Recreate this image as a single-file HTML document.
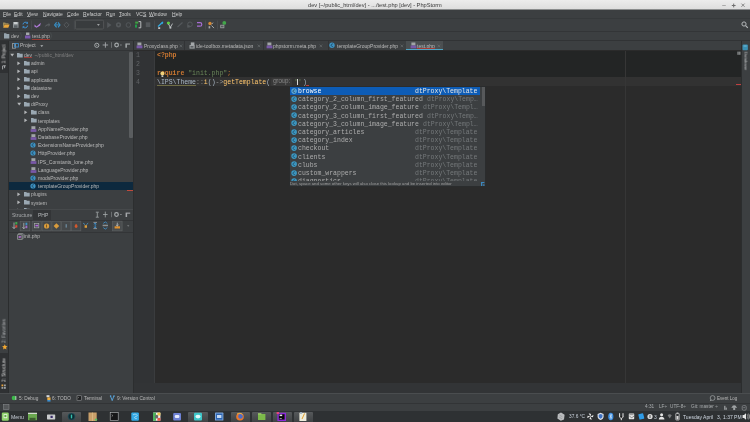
<!DOCTYPE html>
<html><head><meta charset="utf-8">
<style>
*{margin:0;padding:0;box-sizing:border-box}
html,body{width:750px;height:422px;overflow:hidden;background:#3c3f41;font-family:"Liberation Sans",sans-serif;}
.a{position:absolute}
.t{position:absolute;white-space:nowrap;will-change:transform;font-size:5px;line-height:6px;color:#bbbbbb}
u{text-decoration:underline;text-decoration-color:#9a9da0;text-decoration-thickness:0.6px;text-underline-offset:0.2px}
.m{font-family:"Liberation Mono",monospace}
</style></head><body>
<!-- title bar -->
<div class="a" style="left:0;top:0;width:750px;height:9px;background:linear-gradient(#ececec,#dedede)"></div>
<div class="a" style="left:0;top:9px;width:750px;height:1px;background:#8a8c8d"></div>
<div class="t" style="left:308px;top:1.5px;color:#3a3a3a;font-size:5.68px;line-height:7px">dev [~/public_html/dev] - .../test.php [dev] - PhpStorm</div>

<svg class="a" style="left:718px;top:0" width="32" height="9">
<rect x="4.2" y="5.1" width="3.6" height="0.8" fill="#9c9c9c"/>
<path d="M15.7 3.6v3.8M13.8 5.5h3.8" stroke="#6e6e6e" stroke-width="1"/>
<path d="M23.4 3.6l3.2 3.2M26.6 3.6l-3.2 3.2" stroke="#7e7e7e" stroke-width="0.9"/>
</svg>
<!-- menu/toolbar/nav bg -->
<div class="a" style="left:0;top:10px;width:750px;height:30px;background:#3c3f41"></div>
<div class="a" style="left:0;top:18.3px;width:750px;height:0.8px;background:#36393b"></div>
<div class="a" style="left:0;top:30.8px;width:750px;height:0.9px;background:#333537"></div>
<div class="a" style="left:0;top:40.2px;width:750px;height:0.9px;background:#313335"></div>


<!-- MENU -->
<div class="t" style="left:2.5px;top:11px;color:#cdcdcd"><u>F</u>ile</div>
<div class="t" style="left:14.4px;top:11px;color:#cdcdcd"><u>E</u>dit</div>
<div class="t" style="left:26.7px;top:11px;color:#cdcdcd"><u>V</u>iew</div>
<div class="t" style="left:42.7px;top:11px;color:#cdcdcd"><u>N</u>avigate</div>
<div class="t" style="left:67px;top:11px;color:#cdcdcd"><u>C</u>ode</div>
<div class="t" style="left:83px;top:11px;color:#cdcdcd"><u>R</u>efactor</div>
<div class="t" style="left:106.4px;top:11px;color:#cdcdcd">R<u>u</u>n</div>
<div class="t" style="left:119.2px;top:11px;color:#cdcdcd"><u>T</u>ools</div>
<div class="t" style="left:136px;top:11px;color:#cdcdcd">VC<u>S</u></div>
<div class="t" style="left:149.3px;top:11px;color:#cdcdcd"><u>W</u>indow</div>
<div class="t" style="left:171.7px;top:11px;color:#cdcdcd"><u>H</u>elp</div>


<!-- TOOLBAR -->
<svg class="a" style="left:0;top:19px" width="240" height="12" viewBox="0 0 240 12">
 <!-- open folder -->
 <path d="M3 3.5h2.2l.6.8H8.5v1H4.6L3 8.8z" fill="#9a8a5a"/>
 <path d="M3.2 8.8L4.6 5.4H9.6L8.3 8.8z" fill="#e7a53a"/>
 <!-- save -->
 <rect x="13" y="3" width="5.5" height="5.8" fill="#8e9497"/>
 <rect x="14" y="3" width="3.5" height="2" fill="#c8ccce"/>
 <rect x="14" y="6.3" width="3.5" height="2.5" fill="#5a6064"/>
 <!-- sync -->
 <path d="M23 5.5a2.5 2.5 0 0 1 4.6-1.2M27.6 6.5a2.5 2.5 0 0 1-4.6 1.2" stroke="#3e8fcf" stroke-width="1" fill="none"/>
 <path d="M27.9 2.6v2.2h-2.2z M22.6 9.4v-2.2h2.2z" fill="#3e8fcf"/>
 <rect x="31.3" y="1.5" width="0.6" height="9" fill="#4f5356"/>
 <!-- purple check -->
 <path d="M34.6 5.6l2 1.8 4.2-3.6-.6 2.6-3.6 2.4-2.2-1.2z" fill="#b07ad8"/>
 <!-- gray arrow -->
 <path d="M44.6 8.5c.8-2.4 2.4-3.4 4-3.4V3.6l1.6 2.2-1.6 2.2V6.6c-1.6 0-2.8.6-4 1.9z" fill="#5a5e61"/>
 <!-- blue arrows -->
 <path d="M56.6 3.4l-2 2.5 2 2.5M58 3.4l2 2.5-2 2.5" stroke="#3893cc" stroke-width="1.1" fill="none"/>
 <rect x="55.6" y="5.4" width="3.4" height="1" fill="#3893cc"/>
 <!-- gray diamond -->
 <path d="M66.5 3.2l2.6 2.7-2.6 2.7-2.6-2.7z" stroke="#55595c" stroke-width="1" fill="none"/>
 <rect x="73.9" y="1.5" width="0.6" height="9" fill="#4f5356"/>
 <!-- combo box -->
 <rect x="75.4" y="1.2" width="28.2" height="8.8" rx="1.2" fill="#393c3e" stroke="#5b5e60" stroke-width="0.7"/>
 <path d="M97 5.3h2.8l-1.4 1.5z" fill="#c0c3c5"/>
 <!-- play -->
 <path d="M107.2 3l4.3 3-4.3 3z" fill="#54585b"/>
 <!-- debug gear -->
 <circle cx="118.5" cy="5.8" r="2.6" fill="#55595c"/><circle cx="118.5" cy="5.8" r="1" fill="#3c3f41"/>
 <circle cx="128.4" cy="6" r="2.3" stroke="#55595c" stroke-width="0.9" fill="none"/>
 <!-- coverage -->
 <rect x="135.2" y="2.6" width="3" height="2" fill="#3fa142"/>
 <rect x="135.2" y="5.6" width="1.6" height="3" fill="#1fb64e"/>
 <path d="M138.6 2.6h2.2v6.2h-2.2" stroke="#c5c8ca" stroke-width="0.9" fill="none"/>
 <!-- stop -->
 <rect x="145.8" y="3.3" width="4.5" height="4.8" fill="#55595c"/>
 <rect x="154.3" y="1.5" width="0.6" height="9" fill="#4f5356"/>
 <!-- vcs update -->
 <path d="M158 7.5l5-4.5" stroke="#2fa8e0" stroke-width="1.3"/>
 <path d="M160.6 4.2l2.6-1.6-.6 2.6z" fill="#2fa8e0"/>
 <rect x="158.2" y="8.3" width="2" height="1.6" fill="#d0d3d5"/>
 <!-- commit -->
 <circle cx="168.4" cy="4" r="1.6" fill="#5fcf43"/>
 <path d="M168.5 5l1.8 3.4 2.2-3.8" stroke="#c0c3c5" stroke-width="0.9" fill="none"/>
 <rect x="169.5" y="7.8" width="1.8" height="1.8" fill="#c0c3c5"/>
 <path d="M177.5 8l5-4.5" stroke="#55595c" stroke-width="1.1"/>
 <circle cx="190" cy="5.3" r="2.3" stroke="#55595c" stroke-width="1" fill="none"/>
 <rect x="187.2" y="6.2" width="2.4" height="2.4" fill="#55595c"/>
 <!-- revert -->
 <path d="M197 3.6h3a1.8 1.8 0 0 1 0 3.6h-3" stroke="#a66ed3" stroke-width="1.2" fill="none"/>
 <rect x="205.2" y="1.5" width="0.6" height="9" fill="#4f5356"/>
 <!-- settings -->
 <circle cx="210" cy="4.5" r="1.7" fill="#d58a36"/>
 <path d="M211.5 6.5l2.5 2.6M213 3.6l-1.2 1.6" stroke="#a5a9ab" stroke-width="1"/>
 <rect x="208.6" y="7.2" width="1.6" height="2.2" fill="#a5a9ab"/>
 <rect x="217.3" y="1.5" width="0.6" height="9" fill="#4f5356"/>
 <!-- project structure -->
 <circle cx="224.3" cy="3.9" r="1.9" fill="#42a64a"/>
 <rect x="220.3" y="5.8" width="4" height="3.4" fill="#9ea2a4"/>
 <rect x="221" y="6.6" width="2.6" height="1.8" fill="#55595c"/>
</svg>
<!-- search icon -->
<svg class="a" style="left:738px;top:20px" width="12" height="10"><circle cx="6" cy="4" r="2.1" stroke="#b5b8ba" stroke-width="1" fill="none"/><path d="M7.6 5.6l2.2 2.2" stroke="#b5b8ba" stroke-width="1.2"/></svg>

<!-- NAV BAR -->
<svg class="a" style="left:0;top:31px" width="60" height="9">
 <path d="M4 2.3h2.2l.5.6h2.6v4.5H4z" fill="#95a3ad"/>
 <path d="M20.3 1.5l1.2 3.2-1.2 3.2" stroke="#4e5254" stroke-width="0.6" fill="none"/>
 <rect x="26" y="1.5" width="3.4" height="2.6" fill="#a4a8aa"/>
 <rect x="25" y="4.5" width="5.4" height="3" fill="#7b58ae"/>
 <path d="M50.5 1.5l1.2 3.2-1.2 3.2" stroke="#4e5254" stroke-width="0.6" fill="none"/>
</svg>
<div class="t" style="left:11px;top:32.5px">dev</div>
<div class="t" style="left:32px;top:32.5px">test.php</div><div class="a" style="left:32.3px;top:38.6px;width:17.5px;height:0.6px;background:#9a3a32"></div>

<!-- left stripe -->
<div class="a" style="left:0;top:41px;width:8px;height:352px;background:#3c3f41"></div>
<div class="a" style="left:8px;top:41px;width:1px;height:352px;background:#2b2d2e"></div>
<!-- right stripe -->
<div class="a" style="left:741px;top:41px;width:1px;height:352px;background:#2b2d2e"></div>
<div class="a" style="left:742px;top:41px;width:8px;height:352px;background:#3c3f41"></div>

<!-- STRIPES -->
<div class="a" style="left:0;top:41px;width:8px;height:32.2px;background:#2f3133"></div>
<div class="a" style="left:0;top:352.5px;width:8px;height:40px;background:#2f3133"></div>
<div class="t" style="left:4.2px;top:53.7px;transform:translate(-50%,-50%) rotate(-90deg);font-size:4.45px;line-height:5px;color:#d0d0d0">1: Project</div>
<svg class="a" style="left:1.8px;top:65px" width="5" height="5"><path d="M0.6 0.8v3.6M0.8 0.8h3M2.6 0.8v2.4" stroke="#c0c3c5" stroke-width="0.8" fill="none"/></svg>
<div class="t" style="left:4.2px;top:330.6px;transform:translate(-50%,-50%) rotate(-90deg);font-size:4.54px;line-height:5px;color:#a8abad">2: Favorites</div>
<svg class="a" style="left:1.5px;top:344.3px" width="6" height="6"><path d="M2.8 0.3l.8 1.8 1.9.2-1.4 1.3.4 1.9-1.7-1-1.7 1 .4-1.9L.1 2.3 2 2.1z" fill="#f0a732"/></svg>
<div class="t" style="left:4.2px;top:370px;transform:translate(-50%,-50%) rotate(-90deg);font-size:4.64px;line-height:5px;color:#d0d0d0">2: Structure</div>
<svg class="a" style="left:1.3px;top:383.5px" width="6" height="6"><rect x="0.5" y="0.5" width="1.8" height="1.8" fill="#e8a33d"/><rect x="3" y="0.5" width="1.8" height="1.8" fill="#9ea2a4"/><rect x="0.5" y="3" width="1.8" height="1.8" fill="#9ea2a4"/><rect x="3" y="3" width="1.8" height="1.8" fill="#9ea2a4"/></svg>
<svg class="a" style="left:742.2px;top:43.7px" width="7" height="7"><rect x="0.5" y="0.5" width="5.4" height="5.8" rx="1" fill="#3a90b4"/><ellipse cx="3.2" cy="2" rx="1.9" ry="0.8" fill="#66b0cc"/></svg>
<div class="t" style="left:745.5px;top:60.5px;transform:translate(-50%,-50%) rotate(90deg);font-size:4.32px;line-height:5px;color:#c8cacc">Database</div>

<!-- project panel -->
<div class="a" style="left:9px;top:41px;width:124px;height:168px;background:#3c3f41"></div>
<div class="a" style="left:9px;top:50px;width:124px;height:1px;background:#323436"></div>
<div class="a" style="left:9px;top:209px;width:124px;height:0.8px;background:#46494b"></div>
<!-- PROJECT HEADER -->
<svg class="a" style="left:12px;top:42.5px" width="8" height="6"><rect x="0.5" y="0.6" width="3" height="4.6" fill="none" stroke="#9ea2a4" stroke-width="0.8"/><rect x="2.6" y="0.6" width="3.8" height="3.4" fill="none" stroke="#3e8fcf" stroke-width="0.9"/></svg>
<div class="t" style="left:20px;top:42.4px">Project</div>
<svg class="a" style="left:39.5px;top:44.5px" width="4" height="3"><path d="M0.3 0.3h3l-1.5 1.7z" fill="#b4b7b9"/></svg>
<svg class="a" style="left:90px;top:41px" width="43" height="8">
 <circle cx="6.8" cy="4.3" r="2.1" stroke="#a5a9ab" stroke-width="1" fill="none"/><path d="M6.2 3.6l1.4.7-1.4.7z" fill="#a5a9ab"/>
 <path d="M15.4 1.3v5.4M12.7 4h5.4" stroke="#a5a9ab" stroke-width="0.9"/>
 <rect x="21.2" y="1.2" width="0.6" height="5.6" fill="#8c8f91"/>
 <circle cx="26.6" cy="4" r="1.8" stroke="#a5a9ab" stroke-width="1.2" fill="none"/>
 <rect x="30" y="3.7" width="1.8" height="0.6" fill="#a5a9ab"/>
 <rect x="35.4" y="2.5" width="1.5" height="4.2" fill="#a5a9ab"/><rect x="36.6" y="2.5" width="3.4" height="1.1" fill="#a5a9ab"/>
</svg>
<!-- PROJECT TREE -->
<div class="a" style="left:9px;top:51px;width:124px;height:158px;overflow:hidden">
<svg class="a" style="left:1.0px;top:2.00px" width="5" height="4"><path d="M0.3 0.8h3.8l-1.9 2.6z" fill="#b4b7b9"/></svg>
<svg class="a" style="left:7.8px;top:1.60px" width="7" height="5"><path d="M0 0.1h2.3l.6.6H5.7V4.6H0z" fill="#9aa8b2"/></svg>
<div class="t" style="left:15.3px;top:1.10px;color:#bbbbbb"><span style="text-decoration:underline;text-decoration-color:#9a3a36;text-decoration-thickness:0.5px;text-underline-offset:0.3px">dev</span><span style="color:#808080;margin-left:2.5px">~/public_html/dev</span></div>
<svg class="a" style="left:8.0px;top:9.99px" width="4" height="5"><path d="M0.4 0.4v3.8l2.9-1.9z" fill="#b4b7b9"/></svg>
<svg class="a" style="left:14.8px;top:9.79px" width="7" height="5"><path d="M0 0.1h2.3l.6.6H5.7V4.6H0z" fill="#9aa8b2"/></svg>
<div class="t" style="left:22.3px;top:9.29px;color:#bbbbbb">admin</div>
<svg class="a" style="left:8.0px;top:18.18px" width="4" height="5"><path d="M0.4 0.4v3.8l2.9-1.9z" fill="#b4b7b9"/></svg>
<svg class="a" style="left:14.8px;top:17.98px" width="7" height="5"><path d="M0 0.1h2.3l.6.6H5.7V4.6H0z" fill="#9aa8b2"/></svg>
<div class="t" style="left:22.3px;top:17.48px;color:#bbbbbb">api</div>
<svg class="a" style="left:8.0px;top:26.37px" width="4" height="5"><path d="M0.4 0.4v3.8l2.9-1.9z" fill="#b4b7b9"/></svg>
<svg class="a" style="left:14.8px;top:26.17px" width="7" height="5"><path d="M0 0.1h2.3l.6.6H5.7V4.6H0z" fill="#9aa8b2"/></svg>
<div class="t" style="left:22.3px;top:25.67px;color:#bbbbbb">applications</div>
<svg class="a" style="left:8.0px;top:34.56px" width="4" height="5"><path d="M0.4 0.4v3.8l2.9-1.9z" fill="#b4b7b9"/></svg>
<svg class="a" style="left:14.8px;top:34.36px" width="7" height="5"><path d="M0 0.1h2.3l.6.6H5.7V4.6H0z" fill="#9aa8b2"/></svg>
<div class="t" style="left:22.3px;top:33.86px;color:#bbbbbb">datastore</div>
<svg class="a" style="left:8.0px;top:42.75px" width="4" height="5"><path d="M0.4 0.4v3.8l2.9-1.9z" fill="#b4b7b9"/></svg>
<svg class="a" style="left:14.8px;top:42.55px" width="7" height="5"><path d="M0 0.1h2.3l.6.6H5.7V4.6H0z" fill="#9aa8b2"/></svg>
<div class="t" style="left:22.3px;top:42.05px;color:#bbbbbb">dev</div>
<svg class="a" style="left:8.0px;top:51.14px" width="5" height="4"><path d="M0.3 0.8h3.8l-1.9 2.6z" fill="#b4b7b9"/></svg>
<svg class="a" style="left:14.8px;top:50.74px" width="7" height="5"><path d="M0 0.1h2.3l.6.6H5.7V4.6H0z" fill="#9aa8b2"/></svg>
<div class="t" style="left:22.3px;top:50.24px;color:#bbbbbb">dtProxy</div>
<svg class="a" style="left:15.0px;top:59.13px" width="4" height="5"><path d="M0.4 0.4v3.8l2.9-1.9z" fill="#b4b7b9"/></svg>
<svg class="a" style="left:21.8px;top:58.93px" width="7" height="5"><path d="M0 0.1h2.3l.6.6H5.7V4.6H0z" fill="#9aa8b2"/></svg>
<div class="t" style="left:29.3px;top:58.43px;color:#bbbbbb">class</div>
<svg class="a" style="left:15.0px;top:67.32px" width="4" height="5"><path d="M0.4 0.4v3.8l2.9-1.9z" fill="#b4b7b9"/></svg>
<svg class="a" style="left:21.8px;top:67.12px" width="7" height="5"><path d="M0 0.1h2.3l.6.6H5.7V4.6H0z" fill="#9aa8b2"/></svg>
<div class="t" style="left:29.3px;top:66.62px;color:#bbbbbb">templates</div>
<svg class="a" style="left:21.0px;top:74.71px" width="7" height="6"><rect x="1.4" y="0.2" width="4" height="3" fill="#a0a4a6"/><rect x="0.6" y="3.2" width="5.8" height="2.7" fill="#7858a8"/></svg>
<div class="t" style="left:29.3px;top:74.81px;color:#bbbbbb">AppNameProvider.php</div>
<svg class="a" style="left:21.0px;top:82.90px" width="7" height="6"><rect x="1.4" y="0.2" width="4" height="3" fill="#a0a4a6"/><rect x="0.6" y="3.2" width="5.8" height="2.7" fill="#7858a8"/></svg>
<div class="t" style="left:29.3px;top:83.00px;color:#bbbbbb">DatabaseProvider.php</div>
<svg class="a" style="left:21.2px;top:91.09px" width="7" height="6"><circle cx="3" cy="3" r="2.6" fill="#3d94c5"/><path d="M4 1.9a1.3 1.3 0 1 0 0 2.2" stroke="#1d3a4e" stroke-width="0.7" fill="none"/></svg>
<div class="t" style="left:29.3px;top:91.19px;color:#bbbbbb">ExtensionsNameProvider.php</div>
<svg class="a" style="left:21.2px;top:99.28px" width="7" height="6"><circle cx="3" cy="3" r="2.6" fill="#3d94c5"/><path d="M4 1.9a1.3 1.3 0 1 0 0 2.2" stroke="#1d3a4e" stroke-width="0.7" fill="none"/></svg>
<div class="t" style="left:29.3px;top:99.38px;color:#bbbbbb">HttpProvider.php</div>
<svg class="a" style="left:21.0px;top:107.47px" width="7" height="6"><rect x="1.4" y="0.2" width="4" height="3" fill="#a0a4a6"/><rect x="0.6" y="3.2" width="5.8" height="2.7" fill="#7858a8"/></svg>
<div class="t" style="left:29.3px;top:107.57px;color:#bbbbbb">IPS_Constants_lone.php</div>
<svg class="a" style="left:21.0px;top:115.66px" width="7" height="6"><rect x="1.4" y="0.2" width="4" height="3" fill="#a0a4a6"/><rect x="0.6" y="3.2" width="5.8" height="2.7" fill="#7858a8"/></svg>
<div class="t" style="left:29.3px;top:115.76px;color:#bbbbbb">LanguageProvider.php</div>
<svg class="a" style="left:21.2px;top:123.85px" width="7" height="6"><circle cx="3" cy="3" r="2.6" fill="#3d94c5"/><path d="M4 1.9a1.3 1.3 0 1 0 0 2.2" stroke="#1d3a4e" stroke-width="0.7" fill="none"/></svg>
<div class="t" style="left:29.3px;top:123.95px;color:#bbbbbb">modsProvider.php</div>
<div class="a" style="left:0;top:130.94px;width:124px;height:8.2px;background:#0d293e"></div>
<svg class="a" style="left:21.2px;top:132.04px" width="7" height="6"><circle cx="3" cy="3" r="2.6" fill="#3d94c5"/><path d="M4 1.9a1.3 1.3 0 1 0 0 2.2" stroke="#1d3a4e" stroke-width="0.7" fill="none"/></svg>
<div class="t" style="left:29.3px;top:132.14px;color:#bbbbbb">templateGroupProvider.php</div>
<svg class="a" style="left:8.0px;top:141.03px" width="4" height="5"><path d="M0.4 0.4v3.8l2.9-1.9z" fill="#b4b7b9"/></svg>
<svg class="a" style="left:14.8px;top:140.83px" width="7" height="5"><path d="M0 0.1h2.3l.6.6H5.7V4.6H0z" fill="#9aa8b2"/></svg>
<div class="t" style="left:22.3px;top:140.33px;color:#bbbbbb">plugins</div>
<svg class="a" style="left:8.0px;top:149.22px" width="4" height="5"><path d="M0.4 0.4v3.8l2.9-1.9z" fill="#b4b7b9"/></svg>
<svg class="a" style="left:14.8px;top:149.02px" width="7" height="5"><path d="M0 0.1h2.3l.6.6H5.7V4.6H0z" fill="#9aa8b2"/></svg>
<div class="t" style="left:22.3px;top:148.52px;color:#bbbbbb">system</div>
<svg class="a" style="left:8.0px;top:157.41px" width="4" height="5"><path d="M0.4 0.4v3.8l2.9-1.9z" fill="#b4b7b9"/></svg>
<svg class="a" style="left:14.8px;top:157.21px" width="7" height="5"><path d="M0 0.1h2.3l.6.6H5.7V4.6H0z" fill="#9aa8b2"/></svg>
<div class="t" style="left:22.3px;top:156.71px;color:#bbbbbb">uploads</div>
<div class="a" style="left:120px;top:1px;width:3.5px;height:86px;background:#5a5d5f;border-radius:1px"></div>
<div class="a" style="left:118px;top:138.7px;width:6px;height:0.9px;background:#c04a3c"></div>
</div>
<!-- structure panel -->
<div class="a" style="left:9px;top:210px;width:124px;height:183px;background:#3c3f41"></div>

<!-- STRUCTURE -->
<div class="a" style="left:33.2px;top:210px;width:18.3px;height:9.6px;background:#333537"></div>
<div class="t" style="left:11.8px;top:211.8px;color:#a8abad">Structure</div>
<div class="t" style="left:38px;top:211.8px;color:#b8bbbd">PHP</div>
<div class="a" style="left:9px;top:219.5px;width:124px;height:0.8px;background:#333537"></div>
<svg class="a" style="left:90px;top:210px" width="43" height="10">
 <path d="M7.3 2.4v4.6M5.8 2.2h3M5.8 7.2h3" stroke="#a5a9ab" stroke-width="0.8"/>
 <path d="M15.3 1.6v5.8M13 4.5h4.6" stroke="#a5a9ab" stroke-width="0.8"/>
 <rect x="21.3" y="1.8" width="0.6" height="5.4" fill="#8c8f91"/>
 <circle cx="26.5" cy="4.5" r="1.8" stroke="#a5a9ab" stroke-width="1.2" fill="none"/>
 <rect x="30" y="4.2" width="1.8" height="0.6" fill="#a5a9ab"/>
 <rect x="35.6" y="2.6" width="1.5" height="4.4" fill="#a5a9ab"/><rect x="36.8" y="2.6" width="3.4" height="1.1" fill="#a5a9ab"/>
</svg>
<svg class="a" style="left:9px;top:220px" width="124" height="12">
 <path d="M5 2.5v6M3.3 6.8l1.7 1.8 1.7-1.8" stroke="#b4b7b9" stroke-width="0.8" fill="none"/>
 <rect x="6.3" y="2" width="2" height="2.5" fill="#3fa54a"/><rect x="6.3" y="5.2" width="2" height="2.4" fill="#d9473a"/>
 <rect x="11.2" y="1.2" width="9.6" height="9.6" fill="#45484a" stroke="#5c5f61" stroke-width="0.7"/>
 <path d="M14.8 2.8v6M13.4 7.2l1.4 1.5 1.4-1.5" stroke="#b4b7b9" stroke-width="0.8" fill="none"/>
 <rect x="16.5" y="2.7" width="1.8" height="2.4" fill="#3d94c5"/><rect x="16.5" y="5.6" width="1.8" height="2.6" fill="#9b6cc9"/>
 <rect x="23.2" y="1.2" width="9" height="9.6" fill="#45484a" stroke="#5c5f61" stroke-width="0.7"/>
 <rect x="25.6" y="3.4" width="4.2" height="4.4" fill="none" stroke="#a5a9ab" stroke-width="0.7"/><rect x="26.4" y="4.8" width="2.8" height="1.6" fill="#b468e0"/>
 <rect x="33.1" y="1.2" width="9" height="9.6" fill="#45484a" stroke="#5c5f61" stroke-width="0.7"/>
 <circle cx="37.6" cy="6" r="2.6" fill="#d89b3c"/><rect x="37.2" y="4.5" width="0.8" height="3" fill="#6a4a1a"/>
 <rect x="42.9" y="1.2" width="9" height="9.6" fill="#45484a" stroke="#5c5f61" stroke-width="0.7"/>
 <path d="M47.4 3.2l2.8 2.8-2.8 2.8-2.8-2.8z" fill="#d89b3c"/>
 <rect x="52.7" y="1.2" width="9" height="9.6" fill="#45484a" stroke="#5c5f61" stroke-width="0.7"/>
 <rect x="56.6" y="4.2" width="1.2" height="3.4" fill="#6f8ea4"/>
 <rect x="62.5" y="1.2" width="9.3" height="9.6" fill="#45484a" stroke="#5c5f61" stroke-width="0.7"/>
 <path d="M67.1 3.8c1 1 1.4 1.8 1.4 2.8a1.4 1.4 0 0 1-2.8 0c0-1 .4-1.8 1.4-2.8z" fill="#d3582d"/>
 <path d="M74.2 3.2l1.8 1.4M79.2 3.2l-1.8 1.4" stroke="#4aa0d6" stroke-width="0.8"/>
 <rect x="75.6" y="5.2" width="2.4" height="2.6" fill="#d89b3c"/>
 <path d="M84.4 2.4h3.6M84.4 8.6h3.6" stroke="#b0b3b5" stroke-width="0.7"/><path d="M86.2 3v5M85 4.2l1.2-1.2 1.2 1.2M85 6.8l1.2 1.2 1.2-1.2" stroke="#3d94d4" stroke-width="0.8" fill="none"/>
 <path d="M94.3 3.4l2-1.5 2 1.5M94.3 7.6l2 1.5 2-1.5" stroke="#3d94d4" stroke-width="0.8" fill="none"/><rect x="93.6" y="4.7" width="5.4" height="1.5" fill="#8d9193"/>
 <rect x="103.5" y="1.2" width="9.6" height="9.6" fill="#4a4d4f" stroke="#5c5f61" stroke-width="0.7"/>
 <rect x="105.6" y="6.3" width="5.4" height="2.2" fill="#e0922f"/><path d="M108.3 2.6v3.4M107 4.8l1.3 1.2 1.3-1.2" stroke="#c5c8ca" stroke-width="0.7" fill="none"/>
 <path d="M118 5.4h2.4l-1.2 1z" fill="#9a9ea0"/>
</svg>
<div class="a" style="left:9px;top:231.8px;width:124px;height:0.7px;background:#333537"></div>
<svg class="a" style="left:16.6px;top:233px" width="7" height="7"><rect x="1.5" y="0.4" width="4.6" height="5.6" rx="0.5" fill="none" stroke="#9ea2a4" stroke-width="0.7"/><rect x="0.5" y="1.4" width="4.6" height="5.2" rx="0.5" fill="#4a4d4f" stroke="#9ea2a4" stroke-width="0.7"/><path d="M1.6 3.2h2.8l-.9 1.6H1.6z" fill="#c06ce0"/></svg>
<div class="t" style="left:23.6px;top:233.3px">init.php</div>

<!-- editor -->
<div class="a" style="left:133px;top:41px;width:608px;height:9px;background:#3c3f41"></div>
<div class="a" style="left:133px;top:50px;width:608px;height:1px;background:#2b2b2b"></div>
<div class="a" style="left:133px;top:51px;width:608px;height:342px;background:#323436"></div>
<div class="a" style="left:133px;top:51px;width:21px;height:332.2px;background:#313335"></div>
<div class="a" style="left:133px;top:41px;width:0.9px;height:352px;background:#2c2e2f"></div>
<div class="a" style="left:154px;top:51px;width:1px;height:332.2px;background:#3a3c3e"></div>
<div class="a" style="left:155px;top:51px;width:586px;height:332.2px;background:#2b2b2b"></div>
<div class="a" style="left:155px;top:51px;width:586px;height:26px;background:#232525"></div>
<div class="a" style="left:155px;top:77px;width:586px;height:9px;background:#323232"></div>
<div class="a" style="left:625px;top:51px;width:0.8px;height:332.2px;background:#363636"></div>

<!-- TABS -->
<div class="a" style="left:405.8px;top:41px;width:37.6px;height:9px;background:#4b4f51"></div>
<div class="a" style="left:405.8px;top:49.1px;width:37.6px;height:1.3px;background:#4ea6c6"></div>
<svg class="a" style="left:135.8px;top:42px" width="7" height="7"><rect x="1.4" y="0.5" width="4" height="3" fill="#a0a4a6"/><rect x="0.6" y="3.5" width="5.8" height="2.8" fill="#7858a8"/></svg><div class="t" style="left:143.9px;top:42.6px">Proxyclass.php</div><svg class="a" style="left:178.5px;top:43.5px" width="4" height="4"><path d="M0.6 0.6l2.6 2.6M3.2 0.6l-2.6 2.6" stroke="#6f7375" stroke-width="0.6"/></svg><div class="a" style="left:184.4px;top:41px;width:0.7px;height:9px;background:#323436"></div>
<svg class="a" style="left:188.6px;top:42px" width="7" height="7"><rect x="1.8" y="0.4" width="3.6" height="2.6" fill="#a4a8aa"/><rect x="0.5" y="3" width="5.2" height="3.6" fill="#9ea2a4"/><rect x="1.5" y="4" width="3" height="1.6" fill="#5a5e61"/></svg><div class="t" style="left:196px;top:42.6px">ide-toolbox.metadata.json</div><svg class="a" style="left:256.5px;top:43.5px" width="4" height="4"><path d="M0.6 0.6l2.6 2.6M3.2 0.6l-2.6 2.6" stroke="#6f7375" stroke-width="0.6"/></svg><div class="a" style="left:263px;top:41px;width:0.7px;height:9px;background:#323436"></div>
<svg class="a" style="left:265.5px;top:42px" width="7" height="7"><rect x="1.4" y="0.5" width="4" height="3" fill="#a0a4a6"/><rect x="0.6" y="3.5" width="5.8" height="2.8" fill="#7858a8"/></svg><div class="t" style="left:273.3px;top:42.6px">phpstorm.meta.php</div><svg class="a" style="left:319px;top:43.5px" width="4" height="4"><path d="M0.6 0.6l2.6 2.6M3.2 0.6l-2.6 2.6" stroke="#6f7375" stroke-width="0.6"/></svg><div class="a" style="left:328px;top:41px;width:0.7px;height:9px;background:#323436"></div>
<svg class="a" style="left:329.2px;top:42px" width="7" height="7"><circle cx="3" cy="3.2" r="2.7" fill="#3d94c5"/><path d="M4.1 2.1a1.3 1.3 0 1 0 0 2.2" stroke="#1d3a4e" stroke-width="0.7" fill="none"/></svg><div class="t" style="left:336.5px;top:42.6px">templateGroupProvider.php</div><svg class="a" style="left:400.2px;top:43.5px" width="4" height="4"><path d="M0.6 0.6l2.6 2.6M3.2 0.6l-2.6 2.6" stroke="#6f7375" stroke-width="0.6"/></svg>
<svg class="a" style="left:409.5px;top:42px" width="7" height="7"><rect x="1.4" y="0.5" width="4" height="3" fill="#a0a4a6"/><rect x="0.6" y="3.5" width="5.8" height="2.8" fill="#7858a8"/></svg><div class="t" style="left:416.6px;top:42.6px">test.php</div><div class="a" style="left:417px;top:48px;width:18px;height:0.6px;background:#a83a33"></div><svg class="a" style="left:436.6px;top:43.5px" width="4" height="4"><path d="M0.6 0.6l2.6 2.6M3.2 0.6l-2.6 2.6" stroke="#6f7375" stroke-width="0.6"/></svg>
<svg class="a" style="left:736.5px;top:51.2px" width="6" height="6"><rect x="0.5" y="0.6" width="1.1" height="3.2" fill="#a5a8aa"/><rect x="2.3" y="0.6" width="1.1" height="3.2" fill="#a5a8aa"/></svg>
<div class="t m" style="left:135.6px;top:52.4px;font-size:6.5px;line-height:7px;color:#606366">1</div>
<div class="t m" style="left:135.6px;top:61.3px;font-size:6.5px;line-height:7px;color:#606366">2</div>
<div class="t m" style="left:135.6px;top:70.2px;font-size:6.5px;line-height:7px;color:#606366">3</div>
<div class="t m" style="left:135.6px;top:79.1px;font-size:6.5px;line-height:7px;color:#606366">4</div>
<div class="t m" style="left:157px;top:52.3px;font-size:6.5px;line-height:7px;color:#a9b7c6"><b style="color:#cc7832">&lt;?php</b></div>
<div class="t m" style="left:157px;top:70.1px;font-size:6.5px;line-height:7px;color:#a9b7c6"><b style="color:#cc7832">require</b> <span style="color:#6a8759">"init.php"</span><span style="color:#cc7832">;</span></div>
<div class="t m" style="left:157px;top:78.9px;font-size:6.5px;line-height:7px;color:#a9b7c6"><span>\IPS\Theme</span><span style="color:#888">::</span><span style="color:#ffc66d">i</span>()<span style="color:#999">-&gt;</span><span style="color:#ffc66d">getTemplate</span>(</div>
<svg class="a" style="left:159.5px;top:71px" width="5" height="7"><circle cx="2.4" cy="2.6" r="2" fill="#f2d27a"/><rect x="1.5" y="4.4" width="1.8" height="1.6" fill="#c9c9c9"/></svg>
<div class="a" style="left:157px;top:85.4px;width:39px;height:0.6px;background:#6e6c45"></div>
<div class="a" style="left:271.4px;top:77.6px;width:20.4px;height:8.2px;background:#393939;border-radius:1.5px"></div>
<div class="t" style="left:272.8px;top:77.2px;color:#8a8a8a;font-size:6.9px;line-height:8px;transform:scaleX(0.88);transform-origin:0 0">group:</div>
<div class="t m" style="left:294.4px;top:78.9px;font-size:6.5px;line-height:7px;color:#6a8759">'</div>
<div class="a" style="left:297.3px;top:78.6px;width:0.8px;height:6.8px;background:#d8d8d8"></div>
<div class="t m" style="left:298.3px;top:78.9px;font-size:6.5px;line-height:7px;color:#6a8759">'</div>
<div class="t m" style="left:302.5px;top:78.9px;font-size:6.5px;line-height:7px;color:#a9b7c6">)</div>
<div class="a" style="left:305.5px;top:85px;width:3.8px;height:0.8px;background:#bc3f3c"></div>
<div class="a" style="left:735.5px;top:83.5px;width:5.5px;height:1.2px;background:#c04040"></div>

<!-- POPUP -->
<div class="a" style="left:289.2px;top:86px;width:196.5px;height:101.2px;background:#3c3f41;border:0.5px solid #2a2c2d"></div>
<div class="a" style="left:289.7px;top:86.5px;width:196px;height:94.4px;overflow:hidden">
<div class="a" style="left:0;top:0.10px;width:190px;height:8.3px;background:#0d5cb6"></div>
<svg class="a" style="left:0.9px;top:1.10px" width="7" height="7"><circle cx="3.1" cy="3.1" r="2.8" fill="#5aa7d8"/><path d="M4.2 2.1a1.35 1.35 0 1 0 0 2.1" stroke="#1f3f55" stroke-width="0.7" fill="none"/></svg>
<div class="t m" style="left:7.9px;top:1.50px;font-size:6.5px;line-height:7px;color:#ffffff">browse</div>
<div class="t m" style="left:125.28px;top:1.50px;font-size:6.5px;line-height:7px;color:#e6e6e6">dtProxy\Template</div>
<svg class="a" style="left:0.9px;top:9.31px" width="7" height="7"><circle cx="3.1" cy="3.1" r="2.8" fill="#3d9bc6"/><path d="M4.2 2.1a1.35 1.35 0 1 0 0 2.1" stroke="#1f3f55" stroke-width="0.7" fill="none"/></svg>
<div class="t m" style="left:7.9px;top:9.71px;font-size:6.5px;line-height:7px;color:#adadad">category_2_column_first_featured</div>
<div class="t m" style="left:136.89px;top:9.71px;font-size:6.5px;line-height:7px;color:#75797b">dtProxy\Temp…</div>
<svg class="a" style="left:0.9px;top:17.52px" width="7" height="7"><circle cx="3.1" cy="3.1" r="2.8" fill="#3d9bc6"/><path d="M4.2 2.1a1.35 1.35 0 1 0 0 2.1" stroke="#1f3f55" stroke-width="0.7" fill="none"/></svg>
<div class="t m" style="left:7.9px;top:17.92px;font-size:6.5px;line-height:7px;color:#adadad">category_2_column_image_feature</div>
<div class="t m" style="left:133.02px;top:17.92px;font-size:6.5px;line-height:7px;color:#75797b">dtProxy\Templ…</div>
<svg class="a" style="left:0.9px;top:25.73px" width="7" height="7"><circle cx="3.1" cy="3.1" r="2.8" fill="#3d9bc6"/><path d="M4.2 2.1a1.35 1.35 0 1 0 0 2.1" stroke="#1f3f55" stroke-width="0.7" fill="none"/></svg>
<div class="t m" style="left:7.9px;top:26.13px;font-size:6.5px;line-height:7px;color:#adadad">category_3_column_first_featured</div>
<div class="t m" style="left:136.89px;top:26.13px;font-size:6.5px;line-height:7px;color:#75797b">dtProxy\Temp…</div>
<svg class="a" style="left:0.9px;top:33.94px" width="7" height="7"><circle cx="3.1" cy="3.1" r="2.8" fill="#3d9bc6"/><path d="M4.2 2.1a1.35 1.35 0 1 0 0 2.1" stroke="#1f3f55" stroke-width="0.7" fill="none"/></svg>
<div class="t m" style="left:7.9px;top:34.34px;font-size:6.5px;line-height:7px;color:#adadad">category_3_column_image_feature</div>
<div class="t m" style="left:133.02px;top:34.34px;font-size:6.5px;line-height:7px;color:#75797b">dtProxy\Templ…</div>
<svg class="a" style="left:0.9px;top:42.15px" width="7" height="7"><circle cx="3.1" cy="3.1" r="2.8" fill="#3d9bc6"/><path d="M4.2 2.1a1.35 1.35 0 1 0 0 2.1" stroke="#1f3f55" stroke-width="0.7" fill="none"/></svg>
<div class="t m" style="left:7.9px;top:42.55px;font-size:6.5px;line-height:7px;color:#adadad">category_articles</div>
<div class="t m" style="left:125.28px;top:42.55px;font-size:6.5px;line-height:7px;color:#75797b">dtProxy\Template</div>
<svg class="a" style="left:0.9px;top:50.36px" width="7" height="7"><circle cx="3.1" cy="3.1" r="2.8" fill="#3d9bc6"/><path d="M4.2 2.1a1.35 1.35 0 1 0 0 2.1" stroke="#1f3f55" stroke-width="0.7" fill="none"/></svg>
<div class="t m" style="left:7.9px;top:50.76px;font-size:6.5px;line-height:7px;color:#adadad">category_index</div>
<div class="t m" style="left:125.28px;top:50.76px;font-size:6.5px;line-height:7px;color:#75797b">dtProxy\Template</div>
<svg class="a" style="left:0.9px;top:58.57px" width="7" height="7"><circle cx="3.1" cy="3.1" r="2.8" fill="#3d9bc6"/><path d="M4.2 2.1a1.35 1.35 0 1 0 0 2.1" stroke="#1f3f55" stroke-width="0.7" fill="none"/></svg>
<div class="t m" style="left:7.9px;top:58.97px;font-size:6.5px;line-height:7px;color:#adadad">checkout</div>
<div class="t m" style="left:125.28px;top:58.97px;font-size:6.5px;line-height:7px;color:#75797b">dtProxy\Template</div>
<svg class="a" style="left:0.9px;top:66.78px" width="7" height="7"><circle cx="3.1" cy="3.1" r="2.8" fill="#3d9bc6"/><path d="M4.2 2.1a1.35 1.35 0 1 0 0 2.1" stroke="#1f3f55" stroke-width="0.7" fill="none"/></svg>
<div class="t m" style="left:7.9px;top:67.18px;font-size:6.5px;line-height:7px;color:#adadad">clients</div>
<div class="t m" style="left:125.28px;top:67.18px;font-size:6.5px;line-height:7px;color:#75797b">dtProxy\Template</div>
<svg class="a" style="left:0.9px;top:74.99px" width="7" height="7"><circle cx="3.1" cy="3.1" r="2.8" fill="#3d9bc6"/><path d="M4.2 2.1a1.35 1.35 0 1 0 0 2.1" stroke="#1f3f55" stroke-width="0.7" fill="none"/></svg>
<div class="t m" style="left:7.9px;top:75.39px;font-size:6.5px;line-height:7px;color:#adadad">clubs</div>
<div class="t m" style="left:125.28px;top:75.39px;font-size:6.5px;line-height:7px;color:#75797b">dtProxy\Template</div>
<svg class="a" style="left:0.9px;top:83.20px" width="7" height="7"><circle cx="3.1" cy="3.1" r="2.8" fill="#3d9bc6"/><path d="M4.2 2.1a1.35 1.35 0 1 0 0 2.1" stroke="#1f3f55" stroke-width="0.7" fill="none"/></svg>
<div class="t m" style="left:7.9px;top:83.60px;font-size:6.5px;line-height:7px;color:#adadad">custom_wrappers</div>
<div class="t m" style="left:125.28px;top:83.60px;font-size:6.5px;line-height:7px;color:#75797b">dtProxy\Template</div>
<svg class="a" style="left:0.9px;top:91.41px" width="7" height="7"><circle cx="3.1" cy="3.1" r="2.8" fill="#3d9bc6"/><path d="M4.2 2.1a1.35 1.35 0 1 0 0 2.1" stroke="#1f3f55" stroke-width="0.7" fill="none"/></svg>
<div class="t m" style="left:7.9px;top:91.81px;font-size:6.5px;line-height:7px;color:#adadad">diagnostics</div>
<div class="t m" style="left:125.28px;top:91.81px;font-size:6.5px;line-height:7px;color:#75797b">dtProxy\Template</div>
</div>
<div class="a" style="left:482px;top:86.6px;width:2.9px;height:19px;background:#57595b"></div>
<div class="t" style="left:290.3px;top:181.3px;font-size:4.3px;line-height:5px;color:#a0a0a0">Dot, space and some other keys will also close this lookup and be inserted into editor</div>
<svg class="a" style="left:480.8px;top:181.8px" width="4" height="5"><path d="M0 0h3.4v1H1.3v3.1H0z M2.3 2.2h1.1v1.9H2.3z" fill="#3b88bf"/></svg>
<!-- bottom tool bar -->
<div class="a" style="left:0;top:393px;width:750px;height:1px;background:#4a4d4f"></div>
<div class="a" style="left:0;top:394px;width:750px;height:9px;background:#3c3f41"></div>
<div class="a" style="left:0;top:403px;width:750px;height:1px;background:#323436"></div>
<div class="a" style="left:0;top:404px;width:750px;height:7px;background:#3c3f41"></div>
<!-- taskbar -->
<div class="a" style="left:0;top:411px;width:750px;height:11px;background:#2e3133"></div>
<!-- BOTTOM CONTENT -->
<svg class="a" style="left:0;top:394px" width="170" height="9">
 <circle cx="14" cy="4" r="2.3" fill="#3cb84a"/><rect x="15.4" y="2" width="0.9" height="4" fill="#c5c8ca"/>
 <rect x="46.5" y="1.2" width="3" height="2" fill="#d8dadc"/><rect x="47.3" y="3.4" width="3.2" height="2.6" fill="#f0b040"/><rect x="47.3" y="6" width="3.2" height="1.6" fill="#3d8fd0"/>
 <rect x="77" y="1.8" width="4.4" height="4.4" fill="#1f2021" stroke="#a0a3a5" stroke-width="0.5"/><path d="M77.8 3l.8.6-.8.6" stroke="#d0d0d0" stroke-width="0.4" fill="none"/>
 <path d="M110.5 2l1.7 4.6 1.7-4.6" stroke="#5aa8e0" stroke-width="0.9" fill="none"/><circle cx="110.6" cy="2" r="0.8" fill="#5aa8e0"/><circle cx="114" cy="2" r="0.8" fill="#5aa8e0"/>
</svg>
<div class="t" style="left:18.8px;top:395.7px;font-size:4.75px">5: Debug</div>
<div class="t" style="left:52px;top:395.7px;font-size:4.75px">6: TODO</div>
<div class="t" style="left:84px;top:395.7px;font-size:4.75px">Terminal</div>
<div class="t" style="left:117px;top:395.7px;font-size:4.75px">9: Version Control</div>
<svg class="a" style="left:708.6px;top:394.5px" width="8" height="7"><circle cx="3.6" cy="3" r="2.4" fill="none" stroke="#a5a9ab" stroke-width="0.7"/><path d="M1.6 4.6l-.8 1.6 1.8-.8" fill="#a5a9ab"/></svg>
<div class="t" style="left:717.2px;top:395.6px;font-size:4.5px">Event Log</div>
<svg class="a" style="left:3px;top:404px" width="7" height="6"><rect x="0.4" y="0.3" width="5.6" height="5.4" fill="#55585a" stroke="#8a8d8f" stroke-width="0.5"/></svg>
<div class="t" style="left:644.7px;top:404.3px;color:#a8abad;font-size:4.7px">4:31</div>
<div class="t" style="left:659px;top:404.3px;color:#a8abad;font-size:4.7px">LF÷</div>
<div class="t" style="left:670px;top:404.3px;color:#a8abad;font-size:4.7px">UTF-8÷</div>
<div class="t" style="left:690.8px;top:404.3px;color:#a8abad;font-size:4.7px">Git: master ÷</div>
<svg class="a" style="left:722px;top:403.5px" width="28" height="7.5">
 <rect x="2.2" y="1.8" width="1.2" height="4" fill="#a0a3a5"/><rect x="3.4" y="3.6" width="1.6" height="2.2" fill="#8a8d8f"/>
 <path d="M10 3.4c0-1.4 1-2.2 2.2-2.2s2.2.8 2.2 2.2z" fill="#a0a3a5"/><rect x="11.2" y="3.6" width="2" height="2.4" fill="#a0a3a5"/><rect x="9.4" y="3.4" width="5.6" height="0.6" fill="#a0a3a5"/>
 <rect x="20.2" y="1.6" width="4" height="4.6" rx="1.2" fill="none" stroke="#8e9193" stroke-width="0.7"/><rect x="21.2" y="3.4" width="2" height="0.7" fill="#8e9193"/>
</svg>
<!-- TASKBAR CONTENT -->
<div class="a" style="left:62px;top:411.5px;width:19.2px;height:10.5px;background:linear-gradient(#56595b,#3f4244);border-radius:1px 1px 0 0"></div>
<div class="a" style="left:188px;top:411.5px;width:20px;height:10.5px;background:linear-gradient(#56595b,#3f4244);border-radius:1px 1px 0 0"></div>
<div class="a" style="left:230.8px;top:411.5px;width:19.4px;height:10.5px;background:linear-gradient(#56595b,#3f4244);border-radius:1px 1px 0 0"></div>
<div class="a" style="left:251.7px;top:411.5px;width:19.2px;height:10.5px;background:linear-gradient(#56595b,#3f4244);border-radius:1px 1px 0 0"></div>
<div class="a" style="left:273px;top:411.5px;width:19px;height:10.5px;background:linear-gradient(#56595b,#3f4244);border-radius:1px 1px 0 0"></div>
<div class="a" style="left:294px;top:411.5px;width:19.2px;height:10.5px;background:linear-gradient(#56595b,#3f4244);border-radius:1px 1px 0 0"></div>
<svg class="a" style="left:0;top:411px" width="320" height="11">
 <rect x="1.8" y="1.6" width="7" height="8.2" rx="1.2" fill="#8fd26b"/><rect x="3.6" y="3.2" width="3.6" height="4" fill="#e9f5df"/><rect x="4.4" y="4" width="2" height="2.2" fill="#63a948"/>
 <rect x="28" y="1.8" width="9" height="7.4" fill="#6aa84f"/><rect x="28" y="1.8" width="9" height="1.2" fill="#d5dbd2"/><rect x="29.5" y="6.8" width="6" height="2.4" fill="#3c5e2f"/>
 <rect x="47" y="3.4" width="8.2" height="5" rx="0.6" fill="#c9cbcd"/><rect x="50.5" y="4.8" width="2.2" height="2.2" fill="#3a2c6a"/>
 <circle cx="71.5" cy="5.6" r="3.7" fill="#1f4a55"/><circle cx="71.5" cy="5.6" r="2.8" fill="#0e2a30"/><rect x="70.8" y="3.6" width="1.4" height="3.8" fill="#34c0b0"/>
 <rect x="88.5" y="1.5" width="8.2" height="8.5" fill="#c9a06a"/><rect x="92.4" y="1.5" width="0.6" height="8.5" fill="#e1c592"/><circle cx="96" cy="8.6" r="1.2" fill="#5ac060"/>
 <rect x="110.2" y="1.6" width="8" height="8" fill="#161718" stroke="#b8bbbd" stroke-width="0.6"/><path d="M111.7 3.6l1.2 1-1.2 1" stroke="#c8c8c8" stroke-width="0.5" fill="none"/>
 <rect x="131.3" y="1.6" width="7.6" height="8.2" rx="1" fill="#33a9e5"/><path d="M133 4c1-1.4 3.6-1 4.3.6-.4 1-2.6.8-2.8 2 0 .8 1.6 1.4 2.4.8" stroke="#d8f0fb" stroke-width="0.6" fill="none"/>
 <rect x="153" y="1.6" width="7.4" height="8.2" rx="0.6" fill="#f4f4f4"/><path d="M153 1.6h3v8.2h-3z" fill="#4eb25c"/><path d="M157.4 1.6h3v3h-3z" fill="#f2c94c"/><path d="M157.4 6.8h3v3h-3z" fill="#e85b4a"/><rect x="155" y="3.8" width="3.2" height="3.6" rx="1.5" fill="#6a6a6a"/>
 <rect x="173.2" y="2" width="7.8" height="7.4" rx="1" fill="#6f83d6"/><rect x="174.8" y="4" width="4.6" height="3" rx="1.2" fill="#e8ecff"/>
 <rect x="194" y="1.8" width="8" height="7.6" rx="1" fill="#3ec7c9"/><ellipse cx="198" cy="5.6" rx="2.6" ry="1.8" fill="#e4fbfb"/>
 <rect x="215" y="1.6" width="8.4" height="8" rx="0.6" fill="#7aa4d8"/><rect x="216" y="2.6" width="6.4" height="6" fill="#2c64b2"/><rect x="217" y="4" width="4.4" height="3" fill="#c5daf2"/>
 <circle cx="240" cy="5.8" r="3.8" fill="#e9782a"/><circle cx="240.5" cy="5.4" r="2.3" fill="#4a6cc8"/><path d="M237 3c1.5-1 4-1 5.4.4" stroke="#f7c14a" stroke-width="0.8" fill="none"/>
 <rect x="258" y="3" width="7.4" height="6" fill="#7cb94a"/><rect x="258" y="2.2" width="3.4" height="1.4" fill="#9ecb6a"/>
 <rect x="277.4" y="1.8" width="8.6" height="8.2" fill="#8d2bd9"/><rect x="278.8" y="3.2" width="5.8" height="5.4" fill="#0a0a0a"/><rect x="279.6" y="3.6" width="2.6" height="1.5" fill="#eaeaea"/><rect x="279.6" y="7.2" width="2.2" height="0.6" fill="#eaeaea"/><rect x="276.6" y="1" width="2.4" height="2" fill="#e6457a"/>
 <rect x="299.4" y="1.8" width="7" height="8.2" fill="#ececdc"/><path d="M302 8l2.6-5.6" stroke="#e3a02d" stroke-width="1"/><rect x="300" y="1" width="2" height="1.8" fill="#9ab"/>
</svg>
<div class="t" style="left:10.8px;top:413.5px;font-size:5.2px;color:#c5cbd4">Menu</div>
<!-- tray -->
<svg class="a" style="left:555px;top:411px" width="195" height="11">
 <path d="M6 1.4l3.6 2.4-.6 4.6-3.2 1.4-3.4-2.2.4-4.4z" fill="#b9bbbd"/><path d="M4.4 4l3 1.8M4 6l3 1.8" stroke="#8a8c8e" stroke-width="0.5"/>
 <path d="M35.3 5.5l-1.6-3.2 2.4.6zM35.3 5.5l3.2-1.6-.6 2.4zM35.3 5.5l1.6 3.2-2.4-.6zM35.3 5.5l-3.2 1.6.6-2.4z" fill="#ececec"/>
 <path d="M45.6 1.8l3 1.1v2.6c0 1.8-1.3 2.9-3 3.6-1.7-.7-3-1.8-3-3.6V2.9z" fill="#dfe4ea"/><path d="M45.6 3l1.9.7v1.8c0 1.1-.8 1.8-1.9 2.2-1.1-.4-1.9-1.1-1.9-2.2V3.7z" fill="#3f72c4"/>
 <ellipse cx="55.8" cy="5.5" rx="2.6" ry="3.8" fill="#3f8fe0"/><path d="M54.8 3.8l2 3.2-1 .8v-4.8l1 .8-2 3.2" stroke="#e8f2fb" stroke-width="0.5" fill="none"/>
 <path d="M64.6 2.2v3.6M68 2.2v3.6M64.6 5.4c0 1.2.8 1.8 1.7 1.8s1.7-.6 1.7-1.8M66.3 7.2v2" stroke="#ececec" stroke-width="1"/>
 <rect x="63.8" y="2.8" width="5.4" height="5.6" rx="0.8" fill="none"/>
 <rect x="73.8" y="2.4" width="5.4" height="5.8" rx="0.6" fill="#e5e5e5"/><path d="M74.4 5.2l2.3 1.5 2.3-1.5" stroke="#4a4a4a" stroke-width="0.6" fill="none"/><rect x="74.4" y="3" width="4.2" height="1.2" fill="#9a9a9a"/>
 <rect x="83.8" y="2.6" width="5" height="5.6" rx="0.6" fill="#2f9be6" transform="rotate(-14 86.3 5.4)"/>
 <circle cx="95" cy="5.5" r="2.6" fill="#dcdcdc"/><rect x="94.5" y="4" width="1" height="3" fill="#505050"/>
 <circle cx="106.6" cy="3.8" r="1.5" fill="#e5e5e5"/><path d="M103.8 8.6c0-2 1.3-2.8 2.8-2.8s2.8.8 2.8 2.8z" fill="#e5e5e5"/>
 <path d="M112.6 4.2a3 3 0 0 1 4.2 0L114.7 7.4z" fill="#7a7c7e"/>
 <rect x="120.8" y="2.4" width="3.4" height="6.6" rx="0.5" fill="none" stroke="#dcdcdc" stroke-width="0.7"/><rect x="121.7" y="1.6" width="1.6" height="0.8" fill="#dcdcdc"/><rect x="121.5" y="5" width="2" height="3.4" fill="#dcdcdc"/>
 <path d="M187.6 4h1.4l2-1.8v6.6l-2-1.8h-1.4z" fill="#e5e5e5"/><path d="M192.2 3.4c1 1 1 3.2 0 4.2M193.4 2.6c1.4 1.4 1.4 4.4 0 5.8" stroke="#e5e5e5" stroke-width="0.6" fill="none"/>
</svg>
<div class="t" style="left:568.7px;top:413.5px;color:#c8d0da;font-size:4.8px">37.6 °C</div>
<div class="t" style="left:654px;top:413.5px;color:#c8d0da">3</div>
<div class="t" style="left:682.5px;top:413.5px;color:#d0d8e2">Tuesday April</div>
<div class="t" style="left:717px;top:413.5px;color:#d0d8e2">3,</div>
<div class="t" style="left:722.8px;top:413.5px;color:#d0d8e2">1:37 PM</div>
</body></html>
